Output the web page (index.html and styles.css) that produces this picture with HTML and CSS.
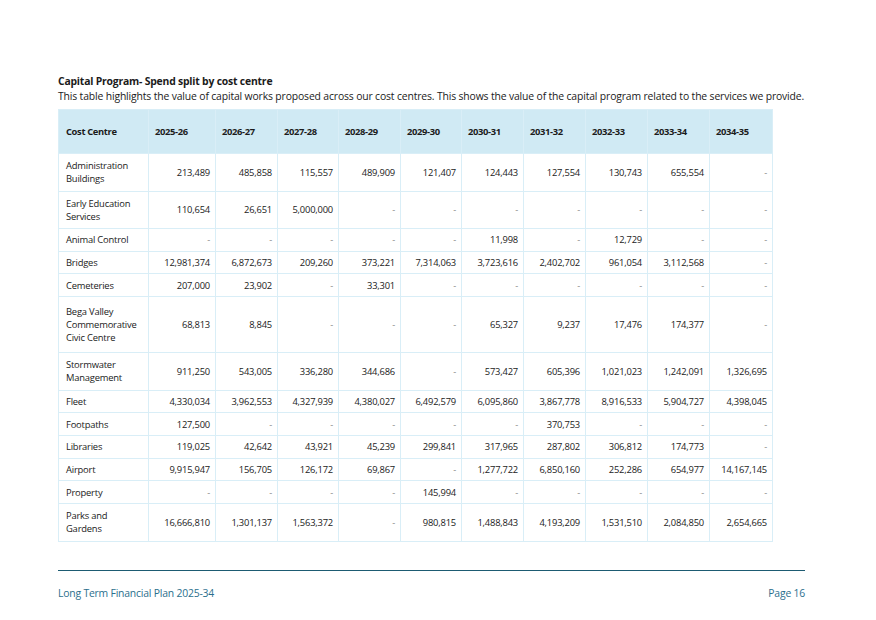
FILE: index.html
```html
<!DOCTYPE html>
<html lang="en">
<head>
<meta charset="utf-8">
<title>Capital Program</title>
<link rel="stylesheet" href="styles.css">
</head>
<body>
<div class="page">
  <main class="content">
    <h2 class="title">Capital Program- Spend split by cost centre</h2>
    <p class="intro">This table highlights the value of capital works proposed across our cost centres. This shows the value of the capital program related to the services we provide.</p>
    <table class="cc">
      <colgroup>
        <col class="c-name"><col class="c-first"><col class="c-n"><col class="c-n61"><col class="c-n"><col class="c-n61"><col class="c-n"><col class="c-n"><col class="c-n"><col class="c-n"><col class="c-last">
      </colgroup>
      <thead>
        <tr class="hd">
          <th>Cost Centre</th><th>2025-26</th><th>2026-27</th><th>2027-28</th><th>2028-29</th><th>2029-30</th><th>2030-31</th><th>2031-32</th><th>2032-33</th><th>2033-34</th><th>2034-35</th>
        </tr>
      </thead>
      <tbody>
        <tr class="r2"><td>Administration Buildings</td><td>213,489</td><td>485,858</td><td>115,557</td><td>489,909</td><td>121,407</td><td>124,443</td><td>127,554</td><td>130,743</td><td>655,554</td><td class="d">-</td></tr>
        <tr class="r2"><td>Early Education Services</td><td>110,654</td><td>26,651</td><td>5,000,000</td><td class="d">-</td><td class="d">-</td><td class="d">-</td><td class="d">-</td><td class="d">-</td><td class="d">-</td><td class="d">-</td></tr>
        <tr class="r1"><td>Animal Control</td><td class="d">-</td><td class="d">-</td><td class="d">-</td><td class="d">-</td><td class="d">-</td><td>11,998</td><td class="d">-</td><td>12,729</td><td class="d">-</td><td class="d">-</td></tr>
        <tr class="r1"><td>Bridges</td><td>12,981,374</td><td>6,872,673</td><td>209,260</td><td>373,221</td><td>7,314,063</td><td>3,723,616</td><td>2,402,702</td><td>961,054</td><td>3,112,568</td><td class="d">-</td></tr>
        <tr class="r1"><td>Cemeteries</td><td>207,000</td><td>23,902</td><td class="d">-</td><td>33,301</td><td class="d">-</td><td class="d">-</td><td class="d">-</td><td class="d">-</td><td class="d">-</td><td class="d">-</td></tr>
        <tr class="r3"><td>Bega Valley Commemorative Civic Centre</td><td>68,813</td><td>8,845</td><td class="d">-</td><td class="d">-</td><td class="d">-</td><td>65,327</td><td>9,237</td><td>17,476</td><td>174,377</td><td class="d">-</td></tr>
        <tr class="r2"><td>Stormwater Management</td><td>911,250</td><td>543,005</td><td>336,280</td><td>344,686</td><td class="d">-</td><td>573,427</td><td>605,396</td><td>1,021,023</td><td>1,242,091</td><td>1,326,695</td></tr>
        <tr class="r1"><td>Fleet</td><td>4,330,034</td><td>3,962,553</td><td>4,327,939</td><td>4,380,027</td><td>6,492,579</td><td>6,095,860</td><td>3,867,778</td><td>8,916,533</td><td>5,904,727</td><td>4,398,045</td></tr>
        <tr class="r1"><td>Footpaths</td><td>127,500</td><td class="d">-</td><td class="d">-</td><td class="d">-</td><td class="d">-</td><td class="d">-</td><td>370,753</td><td class="d">-</td><td class="d">-</td><td class="d">-</td></tr>
        <tr class="r1"><td>Libraries</td><td>119,025</td><td>42,642</td><td>43,921</td><td>45,239</td><td>299,841</td><td>317,965</td><td>287,802</td><td>306,812</td><td>174,773</td><td class="d">-</td></tr>
        <tr class="r1"><td>Airport</td><td>9,915,947</td><td>156,705</td><td>126,172</td><td>69,867</td><td class="d">-</td><td>1,277,722</td><td>6,850,160</td><td>252,286</td><td>654,977</td><td>14,167,145</td></tr>
        <tr class="r1"><td>Property</td><td class="d">-</td><td class="d">-</td><td class="d">-</td><td class="d">-</td><td>145,994</td><td class="d">-</td><td class="d">-</td><td class="d">-</td><td class="d">-</td><td class="d">-</td></tr>
        <tr class="r2"><td>Parks and Gardens</td><td>16,666,810</td><td>1,301,137</td><td>1,563,372</td><td class="d">-</td><td>980,815</td><td>1,488,843</td><td>4,193,209</td><td>1,531,510</td><td>2,084,850</td><td>2,654,665</td></tr>
      </tbody>
    </table>
  </main>
  <footer class="footer">
    <span>Long Term Financial Plan 2025-34</span>
    <span>Page 16</span>
  </footer>
</div>
</body>
</html>
```

FILE: styles.css
```css
html, body {
  margin: 0;
  padding: 0;
  background: #ffffff;
}

body {
  font-family: "Open Sans", "Noto Sans", "Liberation Sans", sans-serif;
  color: #1b1b1b;
}

.page {
  width: 876px;
  height: 620px;
  box-sizing: border-box;
  padding: 74px 71px 0 58px;
  display: flex;
  flex-direction: column;
}

.content {
  height: 496px;
}

.title {
  margin: 0;
  font-size: 10.4px;
  line-height: 15px;
  font-weight: 700;
  letter-spacing: -0.2px;
}

.intro {
  margin: 0 0 5px 0;
  font-size: 10.4px;
  line-height: 15px;
  letter-spacing: -0.15px;
  white-space: nowrap;
}

.cc {
  border-collapse: collapse;
  table-layout: fixed;
  width: 714px;
  font-size: 9.4px;
  letter-spacing: -0.2px;
}

.c-name { width: 90px; }
.c-first { width: 67px; }
.c-n { width: 62px; }
.c-n61 { width: 61px; }
.c-last { width: 63px; }

.cc th,
.cc td {
  border: 1px solid #d9eef7;
  padding: 0 5px;
  vertical-align: middle;
}

.cc th {
  background: #d0eaf4;
  font-weight: 700;
  text-align: left;
  height: 43px;
  padding: 0 6px;
  letter-spacing: -0.35px;
}

.cc th:first-child {
  padding-left: 7px;
}

.cc td {
  text-align: right;
  line-height: 13px;
}

.cc td:first-child {
  text-align: left;
  padding-left: 7px;
}

.cc td.d {
  color: #8a8a8a;
}

.r1 { height: 22.7px; }
.r2 { height: 37.5px; }
.r3 { height: 56px; }

.footer {
  border-top: 1.5px solid #1d5b72;
  padding-top: 15px;
  display: flex;
  justify-content: space-between;
  font-size: 10.4px;
  line-height: 15px;
  color: #2b6f8d;
  letter-spacing: -0.2px;
}
```
